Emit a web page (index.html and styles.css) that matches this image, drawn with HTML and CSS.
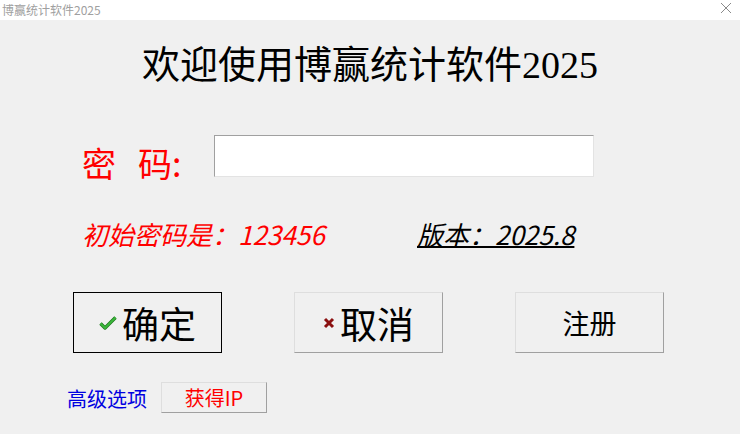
FILE: index.html
```html
<!DOCTYPE html>
<html lang="zh-CN">
<head>
    <meta charset="UTF-8">
    <meta name="viewport" content="width=device-width, initial-scale=1.0">
    <title>博赢统计软件2025</title>
    <link rel="stylesheet" href="styles.css">
</head>
<body>
    <div class="window">
        <div class="titlebar">
            <span class="title">博赢统计软件2025</span>
            <svg class="close" width="12" height="12" viewBox="0 0 12 12">
                <path d="M1 1 L11 11 M11 1 L1 11" stroke="#8a8a8a" stroke-width="1" fill="none"/>
            </svg>
        </div>

        <div class="main">
            <h1 class="heading">欢迎使用博赢统计软件2025</h1>

            <div class="pw-row">
                <label class="pw-label" for="pw"><span class="gap">密</span>码:</label>
                <input id="pw" class="pw-input" type="password">
            </div>

            <div class="hint-row">
                <span class="hint">初始密码是：123456</span>
                <span class="version">版本：2025.8</span>
            </div>

            <div class="btn-row">
                <button class="btn big default">
                    <svg width="18" height="14" viewBox="0 0 18 14">
                        <path d="M1.5 7.5 L6 12 L16.5 1.5" stroke="#1f7a1f" stroke-width="3.4" fill="none" stroke-linejoin="round"/>
                        <path d="M1.5 7.5 L6 12 L16.5 1.5" stroke="#3cb83c" stroke-width="1.8" fill="none" stroke-linejoin="round"/>
                    </svg>确定
                </button>
                <button class="btn big">
                    <svg width="12" height="12" viewBox="0 0 12 12">
                        <path d="M2 2 L10 10 M10 2 L2 10" stroke="#8b1010" stroke-width="3" fill="none"/>
                    </svg>取消
                </button>
                <button class="btn mid">注册</button>
            </div>

            <div class="adv-row">
                <span class="adv">高级选项</span>
                <button class="btn small">获得IP</button>
            </div>
        </div>
    </div>
</body>
</html>
```

FILE: styles.css
```css
body {
    margin: 0;
    background: #f0f0f0;
    font-family: "Noto Sans CJK SC", "Noto Sans", sans-serif;
}
.window {
    width: 740px;
    height: 434px;
    background: #f0f0f0;
    overflow: hidden;
}
.titlebar {
    height: 20px;
    background: #fff;
    display: flex;
    align-items: center;
    justify-content: space-between;
    padding: 0 8px 0 2px;
}
.title {
    font-size: 12px;
    color: #a0a0a0;
    line-height: 20px;
}
.close {
    margin-top: -4px;
}
.main {
    display: flex;
    flex-direction: column;
}
.heading {
    margin: 26px 0 0;
    text-align: center;
    font-family: "Liberation Serif", "Noto Sans CJK SC", serif;
    font-weight: normal;
    font-size: 38px;
    line-height: 38px;
    color: #000;
}
.pw-row {
    display: flex;
    align-items: flex-start;
    margin-top: 51px;
    padding-left: 82px;
}
.pw-label {
    margin-top: 11px;
    font-size: 34px;
    line-height: 34px;
    color: #f00;
    width: 132px;
}
.pw-label .gap {
    margin-right: 22px;
}
.pw-input {
    box-sizing: border-box;
    width: 380px;
    height: 42px;
    margin: 0;
    background: #fff;
    border: 1px solid;
    border-color: #a0a0a0 #e3e3e3 #e3e3e3 #a0a0a0;
    outline: none;
}
.hint-row {
    display: flex;
    margin-top: 41px;
    padding-left: 82px;
    font-size: 26px;
    line-height: 26px;
    font-style: italic;
}
.hint {
    color: #f00;
    width: 335px;
}
.version {
    color: #000;
    text-decoration: underline;
    text-underline-offset: 1px;
}
.btn-row {
    display: flex;
    gap: 72px;
    margin-top: 45px;
    padding-left: 73px;
}
.btn {
    box-sizing: border-box;
    display: flex;
    align-items: center;
    justify-content: center;
    gap: 5px;
    padding: 0;
    background: #f0f0f0;
    border: 1px solid;
    border-color: #dedede #a0a0a0 #a0a0a0 #dedede;
    font-family: "Noto Sans CJK SC", "Noto Sans", sans-serif;
    color: #000;
}
.btn.big {
    width: 149px;
    height: 61px;
    font-size: 37px;
}
.btn.mid {
    width: 149px;
    height: 61px;
    font-size: 27px;
}
.btn.default {
    border: 1px solid #000;
}
.adv-row {
    display: flex;
    align-items: center;
    margin-top: 28px;
    padding-left: 67px;
}
.adv {
    color: #0000e0;
    font-size: 20px;
    width: 94px;
    margin-top: 3px;
}
.btn.small {
    width: 106px;
    height: 31px;
    font-size: 20px;
    color: #f00;
}
```
